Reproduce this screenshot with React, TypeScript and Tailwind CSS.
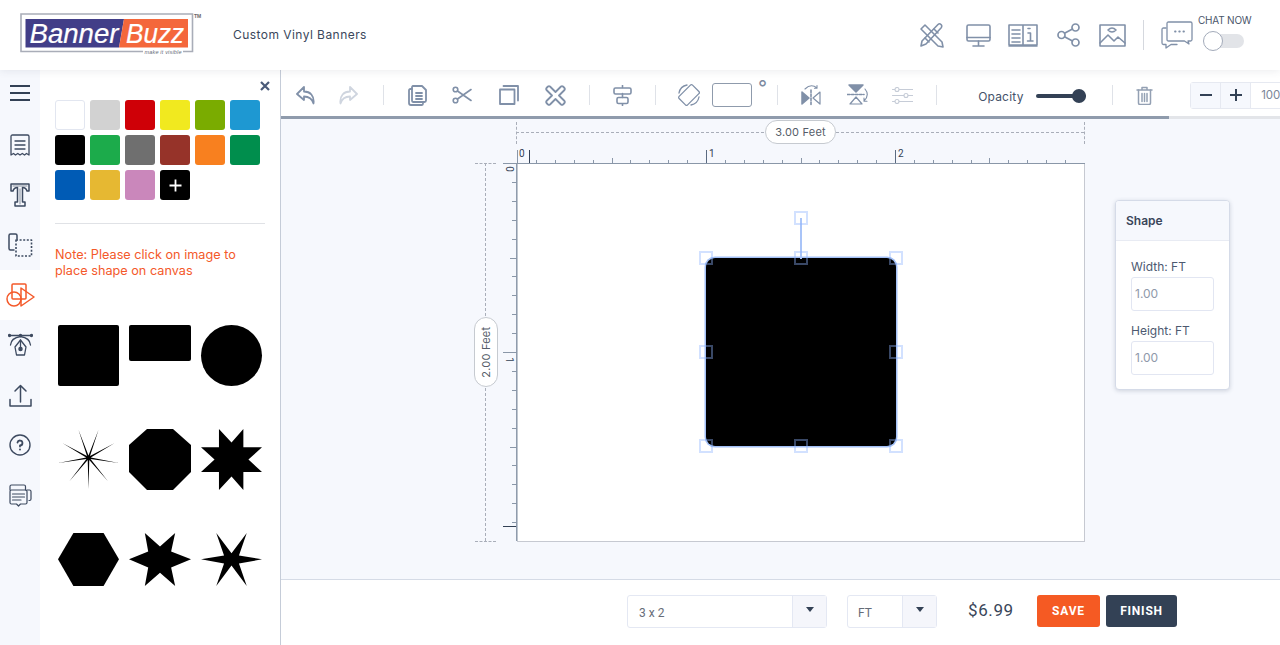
import React from "react";

const UI = "font-['Inter','Open_Sans',sans-serif]";
const RB = "font-['Roboto',sans-serif]";
const C = "#8090a8";

function Ico({ w, h, vb, children, color = C, sw = 1.5, className = "" }: { w: number; h: number; vb?: string; children: React.ReactNode; color?: string; sw?: number; className?: string }) {
  return (
    <svg width={w} height={h} viewBox={vb ?? `0 0 ${w} ${h}`} fill="none" stroke={color} strokeWidth={sw} strokeLinecap="round" strokeLinejoin="round" className={className}>
      {children}
    </svg>
  );
}

const SW = ["#ffffff", "#d2d2d2", "#cf0007", "#f1e91f", "#7aac00", "#1e98d2", "#000000", "#1cab4b", "#6f6f6f", "#963329", "#f8801f", "#008e4d", "#005bb5", "#e6b832", "#ca87bb"];

function spiky() {
  const tips = [[115, 60], [175, 60], [222, 100], [235, 158], [203, 212], [145, 235], [88, 212], [55, 158], [68, 100]];
  const cx = 145, cy = 143;
  const pts: string[] = [];
  tips.forEach((t, i) => {
    pts.push(`${t[0]},${t[1]}`);
    const n = tips[(i + 1) % tips.length];
    const mx = (t[0] + n[0]) / 2 - cx, my = (t[1] + n[1]) / 2 - cy;
    const l = Math.hypot(mx, my);
    pts.push(`${cx + (mx / l) * 7},${cy + (my / l) * 7}`);
  });
  return pts.join(" ");
}

function Shape({ w, h = 61, vb, pts }: { w: number; h?: number; vb: string; pts: string }) {
  return (
    <svg width={w} height={h} viewBox={vb} preserveAspectRatio="none">
      <polygon points={pts} fill="#000" />
    </svg>
  );
}

function Logo() {
  return (
    <svg width={185} height={44} viewBox="0 0 185 44" className="ml-[20px] shrink-0">
      <path d="M163 38.500H172.500V1H1V38.500H123" fill="none" stroke="#a9adb8" strokeWidth="1.600" />
      <polygon points="5.500,6 104,6 99,34.500 5.500,34.500" fill="#423e88" />
      <polygon points="104,6 168,6 168,34.500 99,34.500" fill="#f4673b" />
      <text x="9.500" y="29.500" fill="#fff" stroke="#fff" strokeWidth="0.200" fontFamily="'Liberation Sans',sans-serif" fontStyle="italic" fontSize="27" textLength="89" lengthAdjust="spacingAndGlyphs">Banner</text>
      <text x="106" y="29.500" fill="#fff" stroke="#fff" strokeWidth="0.200" fontFamily="'Liberation Sans',sans-serif" fontStyle="italic" fontSize="27" textLength="58" lengthAdjust="spacingAndGlyphs">Buzz</text>
      <text x="124.500" y="40.500" fill="#666b78" fontFamily="'Liberation Sans',sans-serif" fontStyle="italic" fontSize="5.500" textLength="37">make it visible</text>
      <text x="174" y="4.500" fill="#666" fontFamily="'Liberation Sans',sans-serif" fontSize="5" fontWeight="700">TM</text>
    </svg>
  );
}

const railColor = "#3d4a60";
const rail: { active?: boolean; icon: React.ReactNode }[] = [
  { icon: <Ico w={22} h={23} color={railColor} sw={1.3}><path d="M2 2.500Q2 1 3.500 1H18.500Q20 1 20 2.500V21l-2.500-1.500-2 1.500-2.200-1.500-2.300 1.500-2.200-1.500-2.300 1.500-2-1.500L2 21Z" /><path d="M6 7h10M6 11h10M6 15h10" /></Ico> },
  { icon: <Ico w={20} h={24} color={railColor} sw={1.5}><path d="M1 1H19V8H17Q16 4.500 12.500 4.500V19H15V23H5V19H7.500V4.500Q4 4.500 3 8H1Z" /><path d="M3 3H17M10 6V21" strokeWidth="0.600" /></Ico> },
  { icon: <Ico w={25} h={25} color={railColor} sw={1.5}><path d="M9 6V2.500Q9 1 7.500 1H2.500Q1 1 1 2.500V15.500Q1 17 2.500 17H6" /><rect x="8" y="7" width="15.500" height="16" fill="none" strokeDasharray="2 1.600" strokeLinecap="butt" strokeWidth="1.600" /></Ico> },
  { active: true, icon: <Ico w={29} h={25} color="#f4592a" sw={1.5}><rect x="6" y="1" width="14" height="15" rx="1" /><circle cx="8" cy="16" r="7" /><path d="M15 5V23L28 14Z" /></Ico> },
  { icon: <Ico w={25} h={24} color={railColor} sw={1.3}><path d="M1 2.500H24" /><circle cx="1.500" cy="2.500" r="1" fill={railColor} /><circle cx="23.500" cy="2.500" r="1" fill={railColor} /><circle cx="12.500" cy="2.500" r="1" fill={railColor} /><path d="M2.500 12Q3 5 12.500 3.500Q22 5 22.500 12" /><path d="M12.500 7L18 14 16.500 22H8.500L7 14Z" /><path d="M12.500 7V15" /><circle cx="12.500" cy="16" r="1.600" fill={railColor} /></Ico> },
  { icon: <Ico w={23} h={23} color={railColor} sw={1.5}><path d="M11.500 18V1.500M6 7l5.500-5.500L17 7" /><path d="M1 15.500V22H22V15.500" /></Ico> },
  { icon: <Ico w={22} h={22} color={railColor} sw={1.400}><circle cx="11" cy="11" r="10" /><path d="M8.500 8.500A2.500 2.500 0 1 1 11 11.500V12.500" strokeWidth="1.800" /><path d="M11 15.500V15.600" strokeWidth="2" /></Ico> },
  { icon: <Ico w={23} h={23} color={railColor} sw={1.200}><path d="M1 6V2.500Q1 1 2.500 1H15Q16.500 1 16.500 2.500V6" /><path d="M18 6H20.500Q22 6 22 7.500V15Q22 16.500 20.500 16.500H20" /><path d="M2.500 6H16.500Q18 6 18 7.500V18.500Q18 20 16.500 20H11.500L9.500 22 7.500 20H2.500Q1 20 1 18.500V7.500Q1 6 2.500 6Z" /><path d="M3.500 10H15.500M3.500 13H15.500M3.500 16H12" /></Ico> },
];

function Divider({ className = "" }: { className?: string }) {
  return <div className={`w-px h-[20px] bg-[#dfe2e8] shrink-0 ${className}`} />;
}

function Tool({ className = "", children }: { className?: string; children: React.ReactNode }) {
  return <button className={`w-[44px] h-[30px] flex items-center justify-center shrink-0 ${className}`}>{children}</button>;
}

function Handle({ x, y }: { x: number; y: number }) {
  return <div className="absolute w-[14px] h-[14px] border-2 border-[#8fb3ff66]" style={{ left: x - 7, top: y - 7 }} />;
}

function HRuler() {
  const ticks: React.ReactNode[] = [];
  for (let i = 1; i <= 29; i++) {
    const x = Math.round(i * 18.9) + 0.5;
    const major = i % 10 === 0;
    const mid = i % 5 === 0;
    ticks.push(<line key={i} x1={x} x2={x} y1={major ? 0 : mid ? 8 : 10} y2={14} stroke={major ? "#5b6a80" : "#8a97a8"} />);
  }
  return (
    <svg width="568" height="15" className="absolute left-[236px] top-[31px]">
      {ticks}
      <line x1="0.500" x2="0.500" y1="0" y2="14" stroke="#8a97a8" />
      <line x1="12.500" x2="12.500" y1="0" y2="14" stroke="#334155" />
      <line x1="0" x2="568" y1="13.500" y2="13.500" stroke="#8a97a8" />
    </svg>
  );
}

function VRuler() {
  const ticks: React.ReactNode[] = [];
  for (let i = 1; i <= 19; i++) {
    const y = Math.round(i * 18.9) + 0.5;
    const major = i % 10 === 0;
    const mid = i % 5 === 0;
    ticks.push(<line key={i} y1={y} y2={y} x1={major ? 0 : mid ? 7 : 9} x2={14} stroke="#8a97a8" />);
  }
  return (
    <svg width="15" height="380" className="absolute left-[222px] top-[44px]">
      {ticks}
      <line y1="0.500" y2="0.500" x1="0" x2="14" stroke="#8a97a8" />
      <line y1="363.500" y2="363.500" x1="0" x2="14" stroke="#334155" />
      <line x1="13.800" x2="13.800" y1="0" y2="378" stroke="#8a97a8" strokeWidth="1.500" />
    </svg>
  );
}

export default function App() {
  return (
    <div className={`w-[1280px] h-[645px] flex flex-col overflow-hidden bg-white ${UI}`}>
      <header className="h-[70px] shrink-0 flex items-center relative z-10 bg-white shadow-[0_1px_8px_rgba(60,70,90,0.10)]">
        <Logo />
        <span className="ml-[28px] text-[12px] tracking-[0.45px] text-[#3a475c]">Custom Vinyl Banners</span>
        <div className="ml-auto flex items-center">
          <Ico w={26} h={26} className="mr-[22px]" sw={1.600}>
            <path d="M3 7L7 3 24 20 25 25 20 24Z" />
            <path d="M23 2.500Q24.500 4 23 6L8 22 3 24 4 19 20 2.500Q21.500 1 23 2.500Z" />
            <path d="M7 16L11 20M16 7L20 11" />
          </Ico>
          <Ico w={25} h={23} className="mr-[17px]" sw={1.600}>
            <rect x="1" y="1" width="23" height="16" rx="1.500" />
            <path d="M1 13.500H24M12.500 17V21M7 22H18" />
          </Ico>
          <Ico w={30} h={23} className="mr-[19px]" sw={1.600}>
            <path d="M1 1H15V21H1ZM15 1H29V21H15ZM1 22H29" />
            <path d="M4 6H12M4 10H12M4 14H12M4 18H12" />
            <path d="M20 4.500H22M20 9H22.500V17M19.500 17H25" />
          </Ico>
          <Ico w={23} h={24} className="mr-[19px]" sw={1.700}>
            <circle cx="18.500" cy="4.500" r="3.500" />
            <circle cx="4.500" cy="12" r="3.500" />
            <circle cx="18.500" cy="19.500" r="3.500" />
            <path d="M7.500 10.200L15.500 6M7.500 13.800L15.500 18" />
          </Ico>
          <Ico w={27} h={23} className="mr-[17px]" sw={1.600}>
            <rect x="1" y="1" width="25" height="21" />
            <path d="M1 19L9 11 15 17 19 13 26 19" />
            <path d="M9 6Q13 2 17 6Q13 10 9 6Z" />
          </Ico>
          <div className="w-px h-[30px] bg-[#d5d8de] mr-[17px]" />
          <Ico w={32} h={28} className="mr-[11px]" sw={1.300}>
            <path d="M6 2.500Q6 1 7.500 1H29.500Q31 1 31 2.500V18.500Q31 20 29.500 20H27L28 23 23.500 20H7.500Q6 20 6 18.500Z" />
            <path d="M5 7H2.500Q1 7 1 8.500V22Q1 23.500 2.500 23.500H5V27L10 23.500H16" />
            <path d="M14 10.500H14.600M18.200 10.500H18.800M22.400 10.500H23" strokeWidth="1.800" />
          </Ico>
          <div className="w-[46px] mr-[30px] mb-[8px] flex flex-col">
            <span className="text-[10px] leading-[12px] text-[#4a556a] whitespace-nowrap -ml-[6px] tracking-[-0.2px]">CHAT NOW</span>
            <div className="relative mt-[8px] h-[14px] w-[40px] rounded-full bg-[#e2e4e8]">
              <div className="absolute -left-px -top-[3px] w-[20px] h-[20px] rounded-full bg-white border border-[#a3abba]" />
            </div>
          </div>
        </div>
      </header>

      <div className="flex flex-1 min-h-0">
        <nav className="w-[40px] shrink-0 bg-[#f6f8fd] flex flex-col">
          <div className="h-[50px] flex flex-col items-center gap-[5px] pt-[15px]">
            <div className="w-[20px] h-[2px] bg-[#334155]" />
            <div className="w-[20px] h-[2px] bg-[#334155]" />
            <div className="w-[20px] h-[2px] bg-[#334155]" />
          </div>
          {rail.map((r, i) => (
            <div key={i} className={`h-[50px] flex items-center justify-center ${r.active ? "bg-white" : ""}`}>
              {r.icon}
            </div>
          ))}
        </nav>

        <aside className="w-[240px] shrink-0 bg-white pl-[15px] pr-[15px] flex flex-col relative">
          <svg width="10" height="10" viewBox="0 0 10 10" className="absolute right-[10px] top-[11px]">
            <path d="M1 1L9 9M9 1L1 9" stroke="#4a5a78" strokeWidth="2.200" />
          </svg>
          <div className="grid grid-cols-[repeat(6,30px)] auto-rows-[30px] gap-[5px] mt-[30px]">
            {SW.map((c, i) => (
              <div key={i} className={`rounded-[3px] ${i === 0 ? "border border-[#e2e6f0]" : ""}`} style={{ background: c }} />
            ))}
            <div className="rounded-[3px] bg-black flex items-center justify-center">
              <svg width="13" height="13"><path d="M6.500 0.500V12.500M0.500 6.500H12.500" stroke="#fff" strokeWidth="1.800" /></svg>
            </div>
          </div>
          <div className="h-px bg-[#e0e2e6] mt-[23px]" />
          <p className="mt-[23px] text-[12.700px] leading-[16px] text-[#f4592a]">Note: Please click on image to<br />place shape on canvas</p>
          <div className="grid grid-cols-[61px_62px_61px] gap-x-[10px] ml-[3px] mt-[46px] auto-rows-[61px] gap-y-[43px]">
            <div className="rounded-[2px] bg-black" />
            <div className="h-[36px] w-[62px] rounded-[2px] bg-black" />
            <div className="rounded-full bg-black" />
            <Shape w={61} vb="54 58 182 180" pts={spiky()} />
            <Shape w={62} vb="0 0 62 61" pts="18,0 44,0 62,16 62,43 44,61 18,61 0,43 0,16" />
            <Shape w={61} vb="0 0 180 180" pts="53,0 90,40 125,0 125,54 180,54 140,90 180,127 125,127 125,180 90,140 53,180 53,127 0,127 40,90 0,54 53,54" />
            <Shape w={61} h={53} vb="54 370 182 157" pts="100,370 190,370 236,448 190,527 100,527 54,448" />
            <Shape w={62} h={53} vb="268 370 184 157" pts="268,448 325,425 315,370 360,410 405,370 393,425 452,448 393,472 405,527 360,488 315,527 325,472" />
            <Shape w={61} h={53} vb="485 370 180 157" pts="485,448 553,437 530,370 575,430 620,370 597,437 665,448 597,460 620,527 575,466 530,527 553,460" />
          </div>
        </aside>

        <main className="flex-1 min-w-0 flex flex-col border-l border-[#c5ccd8]">
          <div className="h-[46px] shrink-0 bg-white flex items-center overflow-hidden pt-[4px]">
            <Tool className="ml-[2px]">
              <Ico w={20} h={20} sw={1.800}><path d="M9 2L2 9 9 15V11.500C14 11.500 17 13.500 18.500 18.500C19.500 10.500 15 6.500 9 6.500Z" /></Ico>
            </Tool>
            <Tool>
              <Ico w={20} h={20} sw={1.800} color="#cfd5df"><path d="M11 2L18 9 11 15V11.500C6 11.500 3 13.500 1.500 18.500C0.500 10.500 5 6.500 11 6.500Z" /></Ico>
            </Tool>
            <Divider className="ml-[12px]" />
            <Tool className="ml-[11px]">
              <Ico w={19} h={21} sw={1.800}>
                <path d="M5 1H14L18 5V15.500Q18 17 16.500 17H5Q4 17 4 15.500V2.500Q4 1 5 1Z" />
                <path d="M4 4H2.500Q1 4 1 5.500V18Q1 20 3 20H14Q15 20 15 18.500" />
                <path d="M8 8H14M8 11H14M8 14H14" />
              </Ico>
            </Tool>
            <Tool className="ml-px">
              <Ico w={20} h={18} sw={1.600}>
                <circle cx="3.500" cy="3.500" r="2.300" />
                <circle cx="3.500" cy="14.500" r="2.300" />
                <path d="M5.500 5L19 14.500M5.500 13L19 3.500" />
              </Ico>
            </Tool>
            <Tool className="ml-[3px]">
              <Ico w={20} h={20} sw={1.800}>
                <rect x="1" y="4.500" width="14.500" height="14.500" />
                <path d="M4.500 1H19V15.500" />
              </Ico>
            </Tool>
            <Tool className="ml-[2px]">
              <Ico w={21} h={21} sw={1.800}>
                <path d="M5 1.500L10.500 7 16 1.500Q17 0.800 18 1.500L19.500 3Q20.200 4 19.500 5L14 10.500 19.500 16Q20.200 17 19.500 18L18 19.500Q17 20.200 16 19.500L10.500 14 5 19.500Q4 20.200 3 19.500L1.500 18Q0.800 17 1.500 16L7 10.500 1.500 5Q0.800 4 1.500 3L3 1.500Q4 0.800 5 1.500Z" />
              </Ico>
            </Tool>
            <Divider className="ml-[12px]" />
            <Tool className="ml-[10px]">
              <Ico w={19} h={21} sw={1.600}>
                <path d="M9.500 0.500V2.500M9.500 8.500V12.500M9.500 19V20.500" />
                <rect x="1" y="3" width="17" height="6" rx="1.500" />
                <rect x="4" y="12.500" width="11" height="6" rx="1.500" />
              </Ico>
            </Tool>
            <Divider className="ml-[11px]" />
            <Tool className="ml-[11px]">
              <Ico w={22} h={22} sw={1.300}>
                <rect x="5" y="1.500" width="12" height="19" rx="1.500" transform="rotate(45 11 11)" />
                <path d="M1 9A10 10 0 0 1 9 1M21 13A10 10 0 0 1 13 21" />
              </Ico>
            </Tool>
            <div className="ml-px w-[40px] h-[24px] shrink-0 rounded-[3px] border border-[#8f9bac] bg-white" />
            <span className="ml-[6px] -mt-[14px] text-[20px] leading-[14px] text-[#7c8aa0]">°</span>
            <Divider className="ml-[10px]" />
            <Tool className="ml-[11px]">
              <Ico w={20} h={22}>
                <path d="M1 8L8 14 1 20Z" fill={C} />
                <path d="M19 8L12 14 19 20Z" strokeWidth="1.200" />
                <path d="M10 6V21" strokeDasharray="2.500 1.500" strokeWidth="1.600" />
                <path d="M4 5Q10 -1 16 4M16 1.500V4.200H13.500" strokeWidth="1.100" />
              </Ico>
            </Tool>
            <Tool className="ml-[3px]">
              <Ico w={22} h={22}>
                <path d="M2 1H16L9 8Z" fill={C} />
                <path d="M3 20H15L9 13Z" strokeWidth="1.200" />
                <path d="M0.500 10.500H17" strokeDasharray="2.500 1.500" strokeWidth="1.600" />
                <path d="M18 5Q23 11 17 17M17 14V17.200H20" strokeWidth="1.100" />
              </Ico>
            </Tool>
            <Tool>
              <Ico w={21} h={17} sw={1.100} color="#c6ccd7">
                <path d="M0.500 2.500H21M0.500 8.500H21M0.500 14.500H21" />
                <circle cx="5" cy="2.500" r="2" fill="#fff" />
                <circle cx="14" cy="8.500" r="2" fill="#fff" />
                <circle cx="5" cy="14.500" r="2" fill="#fff" />
              </Ico>
            </Tool>
            <Divider className="ml-[12px]" />
            <span className="ml-[41px] mt-[4px] text-[12px] text-[#45526a] tracking-[0.2px] w-[58px] shrink-0">Opacity</span>
            <div className="relative mt-px w-[50px] h-[4px] shrink-0 rounded-full bg-[#334155]">
              <div className="absolute right-0 -top-[5px] w-[14px] h-[14px] rounded-full bg-[#334155]" />
            </div>
            <Divider className="ml-[26px]" />
            <Tool className="ml-[9px]">
              <Ico w={17} h={19} sw={1.500} color="#93a0b3">
                <path d="M1 4H16M6 4V1.500H11V4" />
                <path d="M2.500 4V17Q2.500 18.500 4 18.500H13Q14.500 18.500 14.500 17V4" />
                <path d="M6 7.500V15.500M8.500 7.500V15.500M11 7.500V15.500" />
              </Ico>
            </Tool>
            <div className="ml-[24px] flex h-[27px] shrink-0 w-[100px] rounded-[3px] border border-[#e6e9f1]">
              <div className="w-[30px] bg-[#f6f8fd] border-r border-[#e6e9f1] flex items-center justify-center">
                <div className="w-[12px] h-[2px] bg-[#334155]" />
              </div>
              <div className="w-[30px] bg-[#f6f8fd] border-r border-[#e6e9f1] flex items-center justify-center">
                <svg width="12" height="12"><path d="M6 0V12M0 6H12" stroke="#334155" strokeWidth="2" /></svg>
              </div>
              <span className="pl-[10px] text-[11.500px] leading-[25px] text-[#7a8698]">100</span>
            </div>
          </div>
          <div className="h-[3px] shrink-0 bg-[#e3e5e9]">
            <div className="h-full w-[888px] bg-[#8f9bac]" />
          </div>

          <section className="flex-1 min-h-0 relative bg-[#f6f8fd] overflow-hidden">
            <div className="absolute left-[236px] top-[44px] w-[568px] h-[379px] bg-white border-r border-b border-[#c6c9d1]" />
            <HRuler />
            <VRuler />
            <span className={`absolute left-[238px] top-[30px] text-[10px] leading-[10px] text-[#334155] ${RB}`}>0</span>
            <span className={`absolute left-[428px] top-[30px] text-[10px] leading-[10px] text-[#334155] ${RB}`}>1</span>
            <span className={`absolute left-[617px] top-[30px] text-[10px] leading-[10px] text-[#334155] ${RB}`}>2</span>
            <span className={`absolute left-[225px] top-[45px] text-[10px] leading-[10px] text-[#334155] rotate-90 ${RB}`}>0</span>
            <span className={`absolute left-[225px] top-[236px] text-[10px] leading-[10px] text-[#334155] rotate-90 ${RB}`}>1</span>

            <div className="absolute left-[235px] top-[13px] w-[568px] border-t border-dashed border-[#a9aeb9]" />
            <div className="absolute left-[235px] top-[3px] h-[22px] border-l border-dashed border-[#a9aeb9]" />
            <div className="absolute left-[803px] top-[3px] h-[22px] border-l border-dashed border-[#a9aeb9]" />
            <div className="absolute left-[484px] top-px w-[71px] h-[24px] rounded-full bg-white border border-[#c6cad0] flex items-center justify-center text-[11px] tracking-[0.2px] text-[#555c68]">3.00 Feet</div>

            <div className="absolute left-[204px] top-[44px] h-[378px] border-l border-dashed border-[#a9aeb9]" />
            <div className="absolute left-[194px] top-[44px] w-[21px] border-t border-dashed border-[#a9aeb9]" />
            <div className="absolute left-[194px] top-[422px] w-[21px] border-t border-dashed border-[#a9aeb9]" />
            <div className="absolute left-[193px] top-[198px] w-[24px] h-[70px] rounded-full bg-white border border-[#c6cad0] flex items-center justify-center">
              <span className="-rotate-90 whitespace-nowrap text-[11px] tracking-[0.2px] text-[#555c68]">2.00 Feet</span>
            </div>

            <div className="absolute left-[425px] top-[139px] w-[190px] h-[188px] rounded-[9px] bg-black shadow-[0_0_0_1.500px_#a3c0f6]" />
            <div className="absolute left-[519px] top-[99px] w-[2px] h-[41px] bg-[#a9c4f8]" />
            <Handle x={520} y={99} />
            <Handle x={425} y={139} />
            <Handle x={520} y={139} />
            <Handle x={615} y={139} />
            <Handle x={425} y={233} />
            <Handle x={615} y={233} />
            <Handle x={425} y={327} />
            <Handle x={520} y={327} />
            <Handle x={615} y={327} />

            <div className="absolute left-[834px] top-[81px] w-[115px] h-[190px] rounded-[4px] bg-white border border-[#d5dbe8] shadow-[0_1px_4px_rgba(70,80,110,0.22)] overflow-hidden">
              <div className="h-[40px] bg-[#f6f8fd] border-b border-[#e8ebf3] flex items-center pl-[10px] text-[12px] font-semibold text-[#3a465a]">Shape</div>
              <div className="px-[15px] pt-[18px]">
                <div className="text-[12px] leading-[16px] text-[#4d5970]">Width: FT</div>
                <div className="mt-[2px] w-[83px] h-[34px] rounded-[3px] border border-[#e2e6f2] pl-[3px] text-[12px] leading-[32px] text-[#8f99aa]">1.00</div>
                <div className="mt-[12px] text-[12px] leading-[16px] text-[#4d5970]">Height: FT</div>
                <div className="mt-[2px] w-[83px] h-[34px] rounded-[3px] border border-[#e2e6f2] pl-[3px] text-[12px] leading-[32px] text-[#8f99aa]">1.00</div>
              </div>
            </div>
          </section>

          <footer className={`h-[66px] shrink-0 bg-white border-t border-[#d5dbe6] flex items-center pl-[346px] pb-[3px] ${RB}`}>
            <div className="flex w-[200px] h-[33px] rounded-[3px] border border-[#e4e8f3]">
              <span className="flex-1 pl-[11px] text-[12px] leading-[34px] text-[#666c78]">3 x 2</span>
              <div className="w-[34px] bg-[#f5f6fb] border-l border-[#e4e8f3] flex items-center justify-center pb-[3px]">
                <svg width="8" height="5"><path d="M0 0H8L4 5Z" fill="#334155" /></svg>
              </div>
            </div>
            <div className="ml-[20px] flex w-[90px] h-[33px] rounded-[3px] border border-[#e4e8f3]">
              <span className="flex-1 pl-[10px] text-[12px] leading-[34px] text-[#666c78]">FT</span>
              <div className="w-[34px] bg-[#f5f6fb] border-l border-[#e4e8f3] flex items-center justify-center pb-[3px]">
                <svg width="8" height="5"><path d="M0 0H8L4 5Z" fill="#334155" /></svg>
              </div>
            </div>
            <span className="ml-[31px] w-[69px] text-[17px] tracking-[0.6px] text-[#3a4659]">$6.99</span>
            <button className="w-[63px] h-[32px] rounded-[3px] bg-[#f55a23] text-white text-[12px] font-bold tracking-[0.8px]">SAVE</button>
            <button className="ml-[6px] w-[71px] h-[32px] rounded-[3px] bg-[#334155] text-white text-[12px] font-bold tracking-[0.8px]">FINISH</button>
          </footer>
        </main>
      </div>
    </div>
  );
}
